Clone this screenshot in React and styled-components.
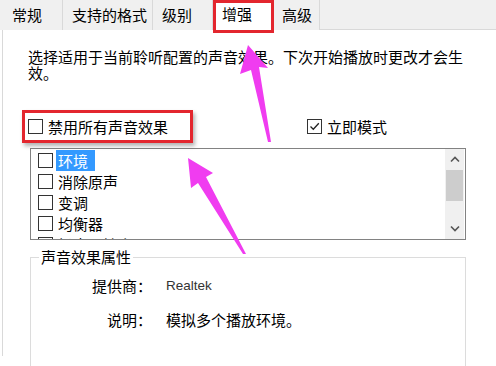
import styled, { createGlobalStyle } from 'styled-components';

const GlobalStyle = createGlobalStyle`
  html, body {
    margin: 0;
    padding: 0;
    background: #ffffff;
  }
  body {
    font-family: "Noto Sans CJK SC", "Noto Sans", sans-serif;
    font-size: 15px;
    color: #000;
  }
`;

const Page = styled.div`
  position: relative;
  width: 496px;
  height: 366px;
  overflow: hidden;
  background: #ffffff;
`;

const TabBar = styled.div`
  display: flex;
  height: 30px;
  background: #f0f0f0;
  border-bottom: 1px solid #d9d9d9;
  box-sizing: border-box;
`;

const Tab = styled.div`
  box-sizing: border-box;
  width: ${p => p.$w}px;
  height: ${p => (p.$active ? 33 : 30)}px;
  padding: ${p => (p.$active ? '3px 0 0 6px' : `7px 0 0 ${p.$pad || 9}px`)};
  line-height: 16px;
  white-space: nowrap;
  background: ${p => (p.$active ? '#ffffff' : '#f0f0f0')};
  border-right: 1px solid #d9d9d9;
  border: ${p => (p.$active ? '3px solid #e3262e' : undefined)};
  position: relative;
  z-index: ${p => (p.$active ? 2 : 1)};
`;

const Panel = styled.div`
  margin-left: 2px;
  height: 326px;
  border-left: 1px solid #d9d9d9;
  padding: 19px 0 0 25px;
  box-sizing: border-box;
`;

const Intro = styled.p`
  margin: 0;
  width: 440px;
  line-height: 16px;
`;

const CheckRow = styled.div`
  display: flex;
  align-items: center;
  margin-top: 29px;
`;

const Highlight = styled.div`
  display: flex;
  align-items: center;
  box-sizing: border-box;
  width: 171px;
  height: 33px;
  margin-left: -6px;
  padding-left: 3px;
  border: 3px solid #e3262e;
  box-shadow: 2px 3px 4px rgba(0, 0, 0, 0.3);
`;

const CheckLabel = styled.label`
  display: flex;
  align-items: center;
  gap: 5px;
  line-height: 18px;
  margin-left: ${p => p.$offset || 0}px;
`;

const Box = styled.span`
  display: inline-flex;
  align-items: center;
  justify-content: center;
  box-sizing: border-box;
  width: 15px;
  height: 15px;
  border: 1px solid #333;
  background: #fff;
  flex-shrink: 0;
`;

const ListBox = styled.div`
  display: flex;
  box-sizing: border-box;
  width: 436px;
  height: 92px;
  margin: 5px 0 0 2px;
  border: 1px solid #828282;
  overflow: hidden;
`;

const Items = styled.div`
  flex: 1;
  padding: 1px 0 0 7px;
  overflow: hidden;
`;

const Item = styled.div`
  display: flex;
  align-items: center;
  height: 21px;
  gap: 5px;
`;

const ItemText = styled.span`
  line-height: 21px;
  padding: 0 7px 0 2px;
  margin-left: -2px;
  background: ${p => (p.$selected ? '#3399ff' : 'transparent')};
  color: ${p => (p.$selected ? '#ffffff' : '#000')};
`;

const ScrollBar = styled.div`
  display: flex;
  flex-direction: column;
  align-items: stretch;
  width: 19px;
  margin-right: 1px;
  background: #f0f0f0;
`;

const ScrollArrow = styled.div`
  display: flex;
  align-items: center;
  justify-content: center;
  height: 21px;
`;

const Thumb = styled.div`
  height: 31px;
  margin: 0 1px;
  background: #cdcdcd;
`;

const Track = styled.div`
  flex: 1;
`;

const Group = styled.fieldset`
  box-sizing: border-box;
  width: 436px;
  height: 120px;
  margin: 8px 0 0 2px;
  padding: 0;
  border: 1px solid #dcdcdc;
  border-bottom: none;
`;

const Legend = styled.legend`
  margin-left: 8px;
  padding: 0 2px;
  line-height: 18px;
`;

const Props = styled.div`
  display: grid;
  grid-template-columns: 121px auto;
  column-gap: 14px;
  row-gap: 14px;
  margin-top: 10px;
`;

const PropLabel = styled.div`
  text-align: right;
  line-height: 20px;
  white-space: nowrap;
`;

const PropValue = styled.div`
  line-height: 20px;
  color: ${p => (p.$latin ? '#333' : '#000')};
  font-family: ${p => (p.$latin ? '"Liberation Sans", Arial, sans-serif' : 'inherit')};
  font-size: ${p => (p.$latin ? '13.5px' : '15px')};
`;

const Arrows = styled.svg`
  position: absolute;
  left: 0;
  top: 0;
  pointer-events: none;
  z-index: 5;
`;

const tabs = [
  { name: '常规', w: 63, pad: 12 },
  { name: '支持的格式', w: 90 },
  { name: '级别', w: 60 },
  { name: '增强', w: 61, active: true },
  { name: '高级', w: 46, pad: 8 },
];

const effects = ['环境', '消除原声', '变调', '均衡器', '扬声器填充'];

const CheckMark = () => (
  <svg width="11" height="11" viewBox="0 0 11 11">
    <path d="M1.5 5.5 L4.3 8.3 L9.8 2.2" fill="none" stroke="#222" strokeWidth="1.3" />
  </svg>
);

const Chevron = ({ down }) => (
  <svg width="10" height="7" viewBox="0 0 10 7">
    <path
      d={down ? 'M1 1.5 L5 5.5 L9 1.5' : 'M1 5.5 L5 1.5 L9 5.5'}
      fill="none"
      stroke="#555"
      strokeWidth="1.6"
    />
  </svg>
);

export default function App() {
  return (
    <Page>
      <GlobalStyle />
      <TabBar>
        {tabs.map(t => (
          <Tab key={t.name} $w={t.w} $pad={t.pad} $active={t.active}>
            {t.name}
          </Tab>
        ))}
      </TabBar>
      <Panel>
        <Intro>选择适用于当前聆听配置的声音效果。下次开始播放时更改才会生效。</Intro>
        <CheckRow>
          <Highlight>
            <CheckLabel>
              <Box />
              禁用所有声音效果
            </CheckLabel>
          </Highlight>
          <CheckLabel $offset={114}>
            <Box>
              <CheckMark />
            </Box>
            立即模式
          </CheckLabel>
        </CheckRow>
        <ListBox>
          <Items>
            {effects.map((e, i) => (
              <Item key={e}>
                <Box />
                <ItemText $selected={i === 0}>{e}</ItemText>
              </Item>
            ))}
          </Items>
          <ScrollBar>
            <ScrollArrow>
              <Chevron />
            </ScrollArrow>
            <Thumb />
            <Track />
            <ScrollArrow>
              <Chevron down />
            </ScrollArrow>
          </ScrollBar>
        </ListBox>
        <Group>
          <Legend>声音效果属性</Legend>
          <Props>
            <PropLabel>提供商：</PropLabel>
            <PropValue $latin>Realtek</PropValue>
            <PropLabel>说明：</PropLabel>
            <PropValue>模拟多个播放环境。</PropValue>
          </Props>
        </Group>
      </Panel>
      <Arrows width="496" height="366" viewBox="0 0 496 366">
        <polygon
          points="248,45 268,68 259,67 271,142 268,142 251,70 240,74"
          fill="#f03cf0"
        />
        <polygon
          points="188,158 213,173 206,177 246,254 243,254 198,183 191,188"
          fill="#f03cf0"
        />
      </Arrows>
    </Page>
  );
}
